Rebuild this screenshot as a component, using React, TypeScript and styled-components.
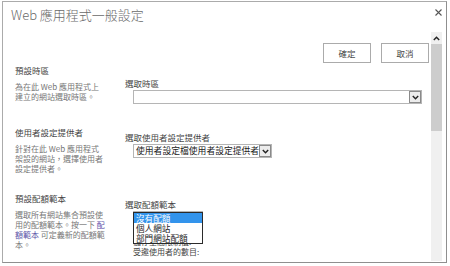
import styled, { createGlobalStyle } from "styled-components";

const GlobalStyle = createGlobalStyle`
  html, body {
    margin: 0;
    padding: 0;
    background: #fff;
  }
  body {
    font-family: "Noto Sans CJK TC", "Noto Sans", sans-serif;
  }
`;

const Page = styled.div`
  width: 450px;
  height: 266px;
  padding: 1px 0 0 2px;
  box-sizing: border-box;
`;

const Dialog = styled.div`
  width: 445px;
  height: 262px;
  box-sizing: border-box;
  border: 1px solid #ababab;
  border-right-color: #8f8f8f;
  border-bottom-color: #8f8f8f;
  display: flex;
  flex-direction: column;
  background: #fff;
  overflow: hidden;
`;

const TitleBar = styled.div`
  height: 30px;
  flex: none;
  display: flex;
  justify-content: space-between;
  align-items: flex-start;
  padding: 4px 1px 0 8px;
  box-sizing: border-box;
`;

const Title = styled.h1`
  margin: 0;
  font-size: 13px;
  font-weight: 300;
  line-height: 18px;
  color: #6a6a6a;
`;

const CloseButton = styled.button`
  border: none;
  background: none;
  padding: 3px;
  margin: 0;
  display: flex;
  cursor: pointer;
`;

const Body = styled.div`
  flex: 1;
  display: flex;
  min-height: 0;
  padding-right: 4px;
`;

const Content = styled.div`
  flex: 1;
  min-width: 0;
  overflow: hidden;
  padding-left: 12px;
`;

const ButtonRow = styled.div`
  display: flex;
  justify-content: flex-end;
  gap: 10px;
  padding: 11px 2px 0 0;
`;

const ActionButton = styled.button`
  width: 48px;
  height: 20px;
  padding: 0;
  border: 1px solid #ababab;
  background: #fff;
  color: #444;
  font-family: inherit;
  font-size: 8.5px;
  line-height: 18px;
`;

const Section = styled.div<{ $height: number }>`
  display: grid;
  grid-template-columns: 110px 1fr;
  height: ${(p) => p.$height}px;
`;

const Aside = styled.div`
  width: 90px;
`;

const Heading = styled.h3`
  margin: 0 0 6px;
  font-size: 8.5px;
  font-weight: 400;
  line-height: 12px;
  color: #444;
`;

const Description = styled.p`
  margin: 0;
  font-size: 8px;
  line-height: 10px;
  color: #777;
`;

const Link = styled.a`
  color: #5b54a8;
  text-decoration: none;
`;

const Field = styled.div<{ $top: number }>`
  padding: ${(p) => p.$top}px 8px 0 0;
`;

const Label = styled.div`
  font-size: 8.5px;
  line-height: 12px;
  color: #444;
  margin-bottom: 1px;
`;

const SelectBox = styled.div<{ $width: number }>`
  margin-left: 8px;
  width: ${(p) => p.$width}px;
  height: 14px;
  box-sizing: border-box;
  border: 1px solid #b5b5b5;
  display: flex;
  background: #fff;
`;

const SelectValue = styled.span`
  flex: 1;
  min-width: 0;
  overflow: hidden;
  white-space: nowrap;
  font-size: 8.8px;
  line-height: 12px;
  color: #222;
  padding-left: 2px;
`;

const SelectArrow = styled.span`
  width: 12px;
  flex: none;
  box-sizing: border-box;
  border: 1px solid #8a8a8a;
  background: #ececec;
  display: flex;
  align-items: center;
  justify-content: center;
`;

const QuotaPicker = styled.div`
  position: relative;
`;

const ListBox = styled.ul`
  position: absolute;
  left: 8px;
  top: 1px;
  width: 70px;
  margin: 0;
  padding: 0;
  list-style: none;
  box-sizing: border-box;
  border: 1px solid #2b2b2b;
  background: #fff;
  z-index: 2;
`;

const ListItem = styled.li<{ $selected?: boolean }>`
  font-size: 8.6px;
  line-height: 10px;
  height: 10px;
  padding-left: 2px;
  white-space: nowrap;
  color: ${(p) => (p.$selected ? "#fff" : "#222")};
  background: ${(p) => (p.$selected ? "#3394ec" : "transparent")};
`;

const FieldText = styled.div<{ $gap?: number }>`
  margin: ${(p) => p.$gap ?? 0}px 0 0 8px;
  font-size: 8px;
  line-height: 10px;
  color: #444;
  white-space: nowrap;
`;

const Scrollbar = styled.div`
  width: 11px;
  flex: none;
  display: flex;
  flex-direction: column;
  background: #f0f0f0;
  margin-bottom: 1px;
`;

const ScrollArrow = styled.div`
  height: 12px;
  display: flex;
  align-items: center;
  justify-content: center;
`;

const ScrollThumb = styled.div`
  height: 87px;
  background: #cdcdcd;
`;

const Chevron = ({ up }: { up?: boolean }) => (
  <svg width="7" height="5" viewBox="0 0 7 5">
    <path
      d={up ? "M0.8 4 L3.5 1.2 L6.2 4" : "M0.8 1 L3.5 3.8 L6.2 1"}
      fill="none"
      stroke="#222"
      strokeWidth="1.4"
    />
  </svg>
);

function App() {
  return (
    <Page>
      <GlobalStyle />
      <Dialog>
        <TitleBar>
          <Title>Web 應用程式一般設定</Title>
          <CloseButton aria-label="關閉">
            <svg width="7" height="7" viewBox="0 0 7 7">
              <path d="M0.5 0.5 L6.5 6.5 M6.5 0.5 L0.5 6.5" stroke="#555" strokeWidth="1.1" />
            </svg>
          </CloseButton>
        </TitleBar>
        <Body>
          <Content>
            <ButtonRow>
              <ActionButton>確定</ActionButton>
              <ActionButton>取消</ActionButton>
            </ButtonRow>
            <Section $height={62} style={{ marginTop: 1 }}>
              <Aside>
                <Heading>預設時區</Heading>
                <Description>為在此 Web 應用程式上建立的網站選取時區。</Description>
              </Aside>
              <Field $top={13}>
                <Label>選取時區</Label>
                <SelectBox $width={289}>
                  <SelectValue />
                  <SelectArrow>
                    <Chevron />
                  </SelectArrow>
                </SelectBox>
              </Field>
            </Section>
            <Section $height={66}>
              <Aside>
                <Heading>使用者設定提供者</Heading>
                <Description>針對在此 Web 應用程式架設的網站，選擇使用者設定提供者。</Description>
              </Aside>
              <Field $top={5}>
                <Label>選取使用者設定提供者</Label>
                <SelectBox $width={139}>
                  <SelectValue>使用者設定檔使用者設定提供者</SelectValue>
                  <SelectArrow>
                    <Chevron />
                  </SelectArrow>
                </SelectBox>
              </Field>
            </Section>
            <Section $height={80}>
              <Aside>
                <Heading>預設配額範本</Heading>
                <Description>
                  選取所有網站集合預設使用的配額範本。按一下 <Link href="#">配額範本</Link> 可定義新的配額範本。
                </Description>
              </Aside>
              <Field $top={6}>
                <Label>選取配額範本</Label>
                <QuotaPicker>
                  <SelectBox $width={70} />
                  <ListBox>
                    <ListItem $selected>沒有配額</ListItem>
                    <ListItem>個人網站</ListItem>
                    <ListItem>部門網站配額</ListItem>
                  </ListBox>
                  <FieldText $gap={12}>儲存空間限制值:</FieldText>
                  <FieldText>受邀使用者的數目:</FieldText>
                </QuotaPicker>
              </Field>
            </Section>
          </Content>
          <Scrollbar>
            <ScrollArrow>
              <Chevron up />
            </ScrollArrow>
            <ScrollThumb />
          </Scrollbar>
        </Body>
      </Dialog>
    </Page>
  );
}

export default App;
